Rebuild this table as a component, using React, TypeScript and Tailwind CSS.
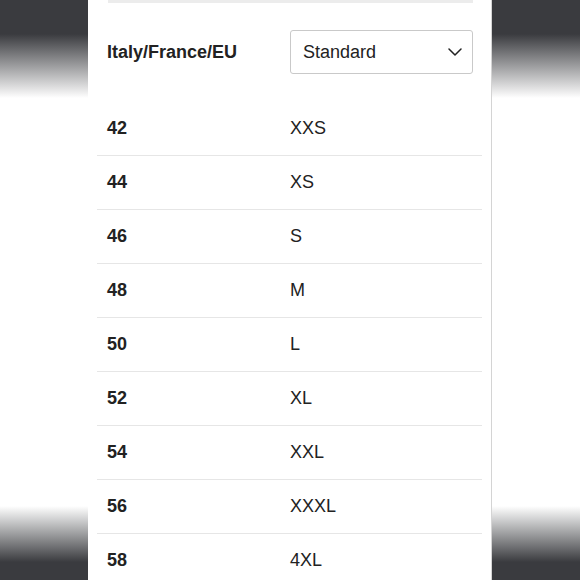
import React from "react";

const sizes = [
  ["42", "XXS"],
  ["44", "XS"],
  ["46", "S"],
  ["48", "M"],
  ["50", "L"],
  ["52", "XL"],
  ["54", "XXL"],
  ["56", "XXXL"],
  ["58", "4XL"],
];

const Side = () => (
  <div className="w-[88px] h-full shrink-0 bg-[linear-gradient(to_bottom,#3a3b3f_0px,#3a3b3f_34px,#ffffff_98px,#ffffff_506px,#3a3b3f_562px)]" />
);

export default function App() {
  return (
    <div className="w-[580px] h-[580px] overflow-hidden flex bg-white font-['Liberation_Sans',Arial,sans-serif] text-[18px] text-[#222222]">
      <Side />
      <div className="w-[404px] h-full shrink-0 bg-white border-r border-[#d4d4d4] flex flex-col">
        <div className="ml-[20px] mr-[18px] h-[3px] shrink-0 bg-[#ececec]" />
        <div className="mt-[27px] pl-[19px] pr-[18px] flex items-center">
          <div className="w-[183px] font-bold">Italy/France/EU</div>
          <div className="w-[183px] h-[44px] border border-[#c9c9c9] rounded-[3px] flex items-center justify-between pl-[12px] pr-[10px]">
            <span>Standard</span>
            <svg width="14" height="8" viewBox="0 0 14 8" fill="none" stroke="#222222" strokeWidth="1.5" strokeLinecap="round" strokeLinejoin="round">
              <path d="M1 1l6 6 6-6" />
            </svg>
          </div>
        </div>
        <div className="mt-[28px] mx-[9px] flex flex-col">
          {sizes.map(([eu, size]) => (
            <div key={eu} className="h-[54px] shrink-0 border-b border-[#e6e6e6] flex items-center pl-[10px]">
              <div className="w-[183px] font-bold">{eu}</div>
              <div>{size}</div>
            </div>
          ))}
        </div>
      </div>
      <Side />
    </div>
  );
}
